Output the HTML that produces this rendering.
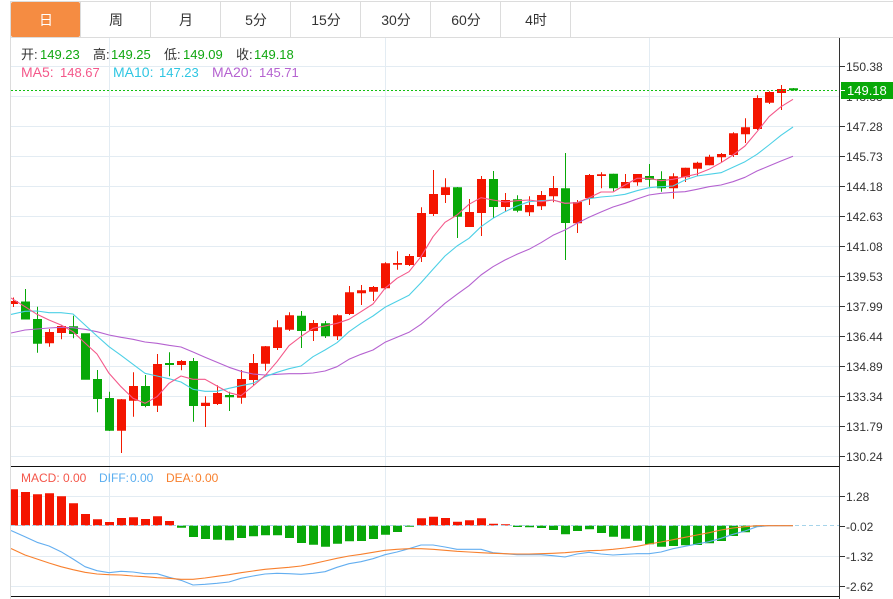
<!DOCTYPE html>
<html><head><meta charset="utf-8">
<style>
html,body{margin:0;padding:0;background:#fff;width:893px;height:599px;overflow:hidden}
svg{display:block}
text{font-family:"Liberation Sans","Noto Sans CJK SC",sans-serif}
.ax{font-size:12px;fill:#333}
.tab{font-size:14px;fill:#333;text-anchor:middle}
.h{font-size:13px}
.l{font-size:14px}
</style></head><body>
<svg width="893" height="599" viewBox="0 0 893 599" xmlns="http://www.w3.org/2000/svg">
<defs><clipPath id="c"><rect x="11" y="38" width="828" height="560"/></clipPath></defs>
<!-- frame -->
<path d="M10 1.5H893M10 37.5H893M10.5 1V599M80.5 2V37M150.5 2V37M220.5 2V37M290.5 2V37M360.5 2V37M430.5 2V37M500.5 2V37M570.5 2V37" stroke="#dcdcdc" fill="none"/>
<rect x="11" y="2" width="69" height="35" rx="2" fill="#f58c42"/>
<text class="tab" x="46" y="25" style="fill:#fff">日</text>
<text class="tab" x="116" y="25">周</text>
<text class="tab" x="186" y="25">月</text>
<text class="tab" x="256" y="25">5分</text>
<text class="tab" x="326" y="25">15分</text>
<text class="tab" x="396" y="25">30分</text>
<text class="tab" x="466" y="25">60分</text>
<text class="tab" x="536" y="25">4时</text>
<!-- grid -->
<path d="M11 66.5H839M11 96.5H839M11 126.5H839M11 156.5H839M11 186.5H839M11 216.5H839M11 246.5H839M11 276.5H839M11 306.5H839M11 336.5H839M11 366.5H839M11 396.5H839M11 426.5H839M11 456.5H839M11 496.5H839M11 556.5H839M11 586.5H839M109.5 38V597M385.5 38V597M649.5 38V597" stroke="#e3ecf3" fill="none"/>
<g clip-path="url(#c)">
<!-- red wicks -->
<path fill="none" stroke="#f21a00" d="M13.5 297.5V307M49.5 329V346.7M61.5 325V339.3M121.5 399V453M133.5 372.3V416.7M157.5 354V412M181.5 360V370.3M205.5 396.3V427M217.5 385.3V405M241.5 370V403.7M253.5 354V385.3M265.5 346V370.7M277.5 320.3V350M289.5 312.3V331M313.5 320V341M337.5 314.3V340M349.5 286V315M361.5 285V305M373.5 286V301M385.5 262.3V289.3M397.5 251.3V269.7M409.5 254V266M421.5 207.3V262M433.5 170V216M445.5 178.3V203M469.5 199V227M481.5 176V236M505.5 193V212M529.5 196.3V216M541.5 191V210M553.5 176V202.3M577.5 200V233M589.5 174V205M601.5 172.3V188.3M625.5 174V188.3M637.5 174V185.7M673.5 173.3V198.7M685.5 167.7V182M697.5 161.7V175.7M709.5 154.7V165.3M721.5 153V162M733.5 132.3V157M745.5 118.3V143M757.5 95.3V130M769.5 91.3V104M781.5 85V110"/>
<!-- red bodies -->
<path fill="none" stroke="#f41500" stroke-width="9" d="M13.5 301V304M49.5 332V343.3M61.5 326V333M121.5 399.3V430.7M133.5 386V400.7M157.5 364V405.7M181.5 361V365M205.5 402.7V406M217.5 393V404M241.5 379V397.7M253.5 363V380M265.5 346.3V363.7M277.5 327.3V348M289.5 315.3V329.7M313.5 323V331M337.5 315.3V336.3M349.5 292.3V314M361.5 290.3V293.3M373.5 287V291.7M385.5 263.3V288.3M397.5 263V264.7M409.5 256V265M421.5 213V257M433.5 194V214M445.5 187.3V195M469.5 212V227M481.5 179V213M505.5 200V207M529.5 205V212.3M541.5 195V206.3M553.5 188V196.3M577.5 202V223.3M589.5 175V198M601.5 174.3V176M625.5 182V188.3M637.5 174V182.3M673.5 176.3V188.3M685.5 167.7V177.3M697.5 162.7V168.7M709.5 156.7V165.3M721.5 154V157.3M733.5 133.3V155M745.5 127.3V134.3M757.5 98V129M769.5 92V102.7M781.5 89V93"/>
<!-- green wicks -->
<path fill="none" stroke="#08a808" d="M25.5 289V319M37.5 306.7V352.7M73.5 315.7V338.3M97.5 370V412.3M109.5 391.7V431M145.5 375V407.3M169.5 352.3V376.3M193.5 358V421.7M229.5 391.7V411M301.5 311V348M325.5 321V338M457.5 187V238M493.5 171V218M517.5 195.3V212.3M565.5 153V260M613.5 173.7V191.3M649.5 164V186.7M661.5 171.3V191.7M793.5 88V90.7"/>
<!-- green bodies -->
<path fill="none" stroke="#08a808" stroke-width="9" d="M25.5 301.5V319.5M37.5 319V343.7M73.5 326.3V334M85.5 333.3V379.7M97.5 379V399M109.5 398V430.7M145.5 386V406M169.5 363V365M193.5 361V406M229.5 395V397.3M301.5 315.7V331M325.5 323.3V336.3M457.5 187.3V216.7M493.5 179V207M517.5 199.3V210.7M565.5 188.3V223M613.5 173.7V188.3M649.5 176V179.7M661.5 179V188.3M793.5 88.3V90.3"/>
<!-- MA lines -->
<g fill="none" stroke-width="1.1" stroke-linejoin="round">
<polyline stroke="#b562d0" points="11,333 25,330 37,329 49,328 61,327.3 73,327.7 85,329.3 97,331.7 109,335 121,337.3 133,339.3 145,342 157,343.3 169,345.3 181,347 193,352 205,357.3 217,362.3 229,367.3 241,371.3 253,374 265,375 277,374.3 289,373.7 301,373.7 313,373 325,371 337,366.7 349,359.3 361,354.3 373,350 385,342.3 397,337.3 409,332.3 421,324.3 433,314 445,303.3 457,294.3 469,285.7 481,275 493,266.7 505,260 517,254.3 529,249.3 541,242.7 553,235.3 565,230 577,223.3 589,217.3 601,212 613,207 625,203.3 637,199 649,195 661,193.3 673,192.3 685,191.7 697,189.3 709,186.7 721,185 733,181.7 745,177.3 757,171 769,166 781,161 793,156.3"/>
<polyline stroke="#4dd0e6" points="11,314.5 25,311.3 37,311 49,312.7 61,312.7 73,314 85,325 97,336 109,346.7 121,355.3 133,364.3 145,373.3 157,376 169,378.7 181,382 193,389.3 205,391.3 217,391.3 229,388.3 241,385.7 253,383.3 265,376.7 277,372.3 289,368.7 301,366 313,356.7 325,350 337,342.7 349,331.7 361,323.3 373,316 385,307.3 397,301.3 409,295.3 421,282.7 433,269.3 445,256 457,246 469,238.3 481,226.7 493,218.3 505,211.7 517,206 529,201.7 541,200.7 553,200 565,203.3 577,202.7 589,198.7 601,197 613,196 625,194.3 637,190.7 649,187.7 661,186.7 673,186 685,180 697,176 709,174.3 721,172.7 733,167.3 745,161.7 757,154.3 769,145 781,135.3 793,127"/>
<polyline stroke="#f4588a" points="11,298 25,306.7 37,314.3 49,320 61,325 73,331.7 85,343 97,354 109,373.3 121,386.7 133,398.3 145,403.3 157,396.7 169,383.3 181,376 193,379.3 205,379.3 217,386 229,392.7 241,395.7 253,386 265,375.7 277,361.7 289,345.7 301,336.5 313,328.3 325,326 337,323.3 349,319.3 361,311.7 373,304 385,288.3 397,278.3 409,271.7 421,256.7 433,236.7 445,222.3 457,215 469,204.3 481,197.7 493,200 505,202 517,200.7 529,200 541,201.7 553,200 565,203.3 577,202.7 589,197.7 601,192 613,192 625,185 637,178.3 649,178.3 661,180.7 673,179.3 685,176.7 697,174 709,169.3 721,162.7 733,155 745,146 757,131.7 769,116.7 781,106.7 793,99.3"/>
</g>
<!-- MACD -->
<path fill="none" stroke="#f41500" stroke-width="9" d="M13.5 525.5V489.3M25.5 525.5V492M37.5 525.5V494.3M49.5 525.5V493.3M61.5 525.5V496.3M73.5 525.5V503.3M85.5 525.5V514M97.5 525.5V519.3M109.5 525.5V522M121.5 525.5V518M133.5 525.5V517.3M145.5 525.5V519M157.5 525.5V516.3M169.5 525.5V521M421.5 525.5V518.3M433.5 525.5V516.7M445.5 525.5V518M457.5 525.5V521.7M469.5 525.5V520.3M481.5 525.5V518.3M493.5 525.5V523.7M505.5 525.5V524.3"/>
<path fill="none" stroke="#08a808" stroke-width="9" d="M181.5 525.5V527.7M193.5 525.5V537M205.5 525.5V539M217.5 525.5V539.7M229.5 525.5V540.3M241.5 525.5V538M253.5 525.5V536.3M265.5 525.5V535.3M277.5 525.5V535.3M289.5 525.5V538M301.5 525.5V543M313.5 525.5V544.7M325.5 525.5V546.7M337.5 525.5V543.7M349.5 525.5V541.3M361.5 525.5V541M373.5 525.5V539M385.5 525.5V534.7M397.5 525.5V532M409.5 525.5V526.7M517.5 525.5V527M529.5 525.5V527.3M541.5 525.5V528M553.5 525.5V530M565.5 525.5V534.3M577.5 525.5V531M589.5 525.5V529.3M601.5 525.5V533M613.5 525.5V536.7M625.5 525.5V538.7M637.5 525.5V540.7M649.5 525.5V544.3M661.5 525.5V546.7M673.5 525.5V546M685.5 525.5V545.3M697.5 525.5V545M709.5 525.5V543.3M721.5 525.5V541M733.5 525.5V536M745.5 525.5V532.3M757.5 525.5V526.7"/>
<path d="M11 525.5H839" stroke="#a6d4ea" stroke-dasharray="4 3" fill="none"/>
<g fill="none" stroke-width="1.1" stroke-linejoin="round">
<polyline stroke="#63aef0" points="11,530.5 25,536.7 37,542.3 49,546 61,551.7 73,559 85,566.7 97,570.7 109,572.7 121,571.3 133,572 145,573.7 157,573.7 169,577.3 181,580.3 193,585 205,584.3 217,583.3 229,582 241,578.3 253,576 265,574 277,573.3 289,573.7 301,574.3 313,573.3 325,571.7 337,567.3 349,563.7 361,561.7 373,558.7 385,554.7 397,552 409,548.7 421,545 433,545 445,547 457,549.3 469,549.3 481,549.3 493,552.7 505,553.7 517,554.7 529,554.7 541,554.7 553,555.7 565,557 577,554 589,552.3 601,554 613,555 625,554.3 637,553.7 649,553.7 661,552 673,548.7 685,546.3 697,544 709,541.7 721,538.3 733,534.3 745,531 757,526.7 769,525.7 793,525.7"/>
<polyline stroke="#f8802e" points="11,548.5 25,555 37,559 49,563 61,566.7 73,569.7 85,572.3 97,574 109,574.7 121,575 133,576 145,576.7 157,577.7 169,578.3 181,579.3 193,579.3 205,578 217,576.3 229,574.7 241,572.7 253,571 265,569.3 277,568.3 289,567.3 301,566 313,563.7 325,561 337,558.3 349,556 361,554.3 373,552.3 385,550.3 397,549.3 409,548.7 421,548.7 433,549.3 445,550.3 457,551.3 469,552 481,552.7 493,553.3 505,553.7 517,554 529,554 541,553.7 553,553.3 565,552.7 577,551.7 589,550.7 601,550.3 613,549.3 625,548 637,546.3 649,544 661,542 673,539.7 685,537.3 697,535 709,532.7 721,530 733,528 745,526.7 757,525.7 793,525.7"/>
</g>
<path d="M11 90.5H839" stroke="#12c012" stroke-dasharray="2 2" fill="none"/>
</g>
<!-- panel lines -->
<path d="M11 466.5H839M11 596.5H839" stroke="#111" fill="none"/>
<path d="M839.5 38V599" stroke="#333" fill="none"/>
<path d="M840 66.5h5M840 126.5h5M840 156.5h5M840 186.5h5M840 216.5h5M840 246.5h5M840 276.5h5M840 306.5h5M840 336.5h5M840 366.5h5M840 396.5h5M840 426.5h5M840 456.5h5M840 496.5h5M840 526.5h5M840 556.5h5M840 586.5h5" stroke="#333" fill="none"/>
<!-- axis labels -->
<g class="ax">
<text class="ax" x="846" y="71">150.38</text>
<text class="ax" x="846" y="101">148.83</text>
<text class="ax" x="846" y="131">147.28</text>
<text class="ax" x="846" y="161">145.73</text>
<text class="ax" x="846" y="191">144.18</text>
<text class="ax" x="846" y="221">142.63</text>
<text class="ax" x="846" y="251">141.08</text>
<text class="ax" x="846" y="281">139.53</text>
<text class="ax" x="846" y="311">137.99</text>
<text class="ax" x="846" y="341">136.44</text>
<text class="ax" x="846" y="371">134.89</text>
<text class="ax" x="846" y="401">133.34</text>
<text class="ax" x="846" y="431">131.79</text>
<text class="ax" x="846" y="461">130.24</text>
<text class="ax" x="846" y="501">1.28</text>
<text class="ax" x="846" y="531">-0.02</text>
<text class="ax" x="846" y="561">-1.32</text>
<text class="ax" x="846" y="591">-2.62</text>
</g>
<rect x="841" y="82" width="52" height="17" fill="#08a808"/>
<path d="M840 90.5h5" stroke="#fff" fill="none"/>
<text x="847" y="95" font-size="13" fill="#fff">149.18</text>
<!-- header -->
<g class="h">
<text class="h" x="21" y="59" fill="#333">开:</text><text class="h" x="40" y="59" fill="#11a811">149.23</text>
<text class="h" x="93" y="59" fill="#333">高:</text><text class="h" x="111" y="59" fill="#11a811">149.25</text>
<text class="h" x="164" y="59" fill="#333">低:</text><text class="h" x="183" y="59" fill="#11a811">149.09</text>
<text class="h" x="236" y="59" fill="#333">收:</text><text class="h" x="254" y="59" fill="#11a811">149.18</text>
<text class="l" x="21" y="77" fill="#f4588a">MA5:</text><text class="h" x="60" y="77" fill="#f4588a">148.67</text>
<text class="l" x="113" y="77" fill="#2fc6e2">MA10:</text><text class="h" x="159" y="77" fill="#2fc6e2">147.23</text>
<text class="l" x="212" y="77" fill="#b562d0">MA20:</text><text class="h" x="259" y="77" fill="#b562d0">145.71</text>
</g>
<text x="21" y="482" font-size="12" fill="#f4564a">MACD:</text><text x="63" y="482" font-size="12" fill="#f4564a">0.00</text>
<text x="99" y="482" font-size="12" fill="#5aaef0">DIFF:</text><text x="130" y="482" font-size="12" fill="#5aaef0">0.00</text>
<text x="166" y="482" font-size="12" fill="#f8802e">DEA:</text><text x="195" y="482" font-size="12" fill="#f8802e">0.00</text>
</svg>
</body></html>
